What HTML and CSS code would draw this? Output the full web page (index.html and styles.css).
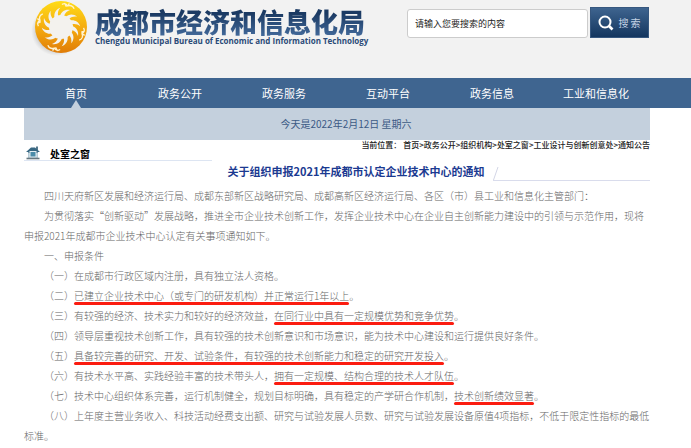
FILE: index.html
```html
<!DOCTYPE html>
<html lang="zh-CN">
<head>
    <meta charset="UTF-8">
    <meta name="viewport" content="width=device-width, initial-scale=1.0">
    <title>成都市经济和信息化局</title>
    <link rel="stylesheet" href="styles.css">
</head>
<body>

<header class="header">
    <div class="wrap header-inner">
        <div class="logo">
            <svg class="emblem" viewBox="0 0 56 56" aria-hidden="true">
                <defs>
                    <linearGradient id="gold" x1="0" y1="0" x2="0" y2="1">
                        <stop offset="0" stop-color="#ffdc18"/>
                        <stop offset="0.5" stop-color="#f5ad10"/>
                        <stop offset="1" stop-color="#e07c08"/>
                    </linearGradient>
                    <radialGradient id="shade">
                        <stop offset="0.6" stop-color="#777" stop-opacity="0.7"/>
                        <stop offset="1" stop-color="#aaa" stop-opacity="0"/>
                    </radialGradient>
                    <path id="ray" d="M27 17 C28 13 32 10 37 11 C34 12 32 14 31 17 Z"/>
                    <path id="bird" d="M23 6 q3 -3 6 0 q4 -3 7 1 M29 6 l1 -3 M25 4 l3 3"/>
                </defs>
                <ellipse cx="26" cy="31" rx="26" ry="25" fill="url(#shade)"/>
                <circle cx="30" cy="27" r="26" fill="url(#gold)"/>
                <g transform="translate(2 -1)">
                    <circle cx="28" cy="28" r="12" fill="#f3f2ee"/>
                    <g fill="#f3f2ee">
                        <use href="#ray"/>
                        <use href="#ray" transform="rotate(30 28 28)"/>
                        <use href="#ray" transform="rotate(60 28 28)"/>
                        <use href="#ray" transform="rotate(90 28 28)"/>
                        <use href="#ray" transform="rotate(120 28 28)"/>
                        <use href="#ray" transform="rotate(150 28 28)"/>
                        <use href="#ray" transform="rotate(180 28 28)"/>
                        <use href="#ray" transform="rotate(210 28 28)"/>
                        <use href="#ray" transform="rotate(240 28 28)"/>
                        <use href="#ray" transform="rotate(270 28 28)"/>
                        <use href="#ray" transform="rotate(300 28 28)"/>
                        <use href="#ray" transform="rotate(330 28 28)"/>
                    </g>
                    <g fill="none" stroke="#fff3cf" stroke-width="1.3">
                        <use href="#bird" transform="rotate(15 28 28)"/>
                        <use href="#bird" transform="rotate(105 28 28)"/>
                        <use href="#bird" transform="rotate(195 28 28)"/>
                        <use href="#bird" transform="rotate(285 28 28)"/>
                    </g>
                </g>
            </svg>
            <div class="logo-text">
                <div class="logo-cn">成都市经济和信息化局</div>
                <div class="logo-en">Chengdu Municipal Bureau of Economic and Information Technology</div>
            </div>
        </div>
        <form class="search">
            <input class="search-input" type="text" placeholder="请输入您要搜索的内容" aria-label="请输入您要搜索的内容">
            <button class="search-btn" type="button">
                <svg width="16" height="16" viewBox="0 0 16 16" fill="none" stroke="#fff" aria-hidden="true">
                    <circle cx="7" cy="7" r="5.5" stroke-width="2"/>
                    <path d="M11 11 L14.5 14.5" stroke-width="2.6"/>
                </svg>
                <span>搜 索</span>
            </button>
        </form>
    </div>
</header>

<nav class="nav">
    <div class="wrap nav-inner">
        <a class="nav-item active" href="#">首页</a>
        <a class="nav-item" href="#">政务公开</a>
        <a class="nav-item" href="#">政务服务</a>
        <a class="nav-item" href="#">互动平台</a>
        <a class="nav-item" href="#">政务信息</a>
        <a class="nav-item" href="#">工业和信息化</a>
    </div>
</nav>

<main class="wrap">
    <div class="date-bar">今天是2022年2月12日 星期六</div>

    <div class="section-head">
        <div class="section-name">
            <svg width="16" height="14" viewBox="0 0 16 14" aria-hidden="true">
                <rect x="3" y="5" width="10" height="7" fill="#b5cbd6"/>
                <path d="M11 0.5 h2 v4 h-2 z" fill="#55788c"/>
                <path d="M1 6 L6 1.5 H10 L15 6 H12.5 V7 H3.5 V6 Z" fill="#376782"/>
                <rect x="5" y="5.5" width="6" height="5.5" fill="#4a8ba8" stroke="#e2edf1"/>
                <path d="M1.5 12.5 H14.5" stroke="#66777f" stroke-width="1.6"/>
            </svg>
            <h2>处室之窗</h2>
        </div>
        <div class="crumbs">当前位置： <a href="#">首页</a>&gt;<a href="#">政务公开</a>&gt;<a href="#">组织机构</a>&gt;<a href="#">处室之窗</a>&gt;<a href="#">工业设计与创新创意处</a>&gt;<a href="#">通知公告</a></div>
    </div>

    <div class="title-row">
        <h1>关于组织申报2021年成都市认定企业技术中心的通知</h1>
        <div class="title-line">
            <svg width="6" height="14" viewBox="0 0 6 14" aria-hidden="true">
                <path d="M0.5 14 L5 1" stroke="#d3d6e6" fill="none"/>
            </svg>
        </div>
    </div>

    <article class="article">
        <p>四川天府新区发展和经济运行局、成都东部新区战略研究局、成都高新区经济运行局、各区（市）县工业和信息化主管部门：</p>
        <p>为贯彻落实“创新驱动”发展战略，推进全市企业技术创新工作，发挥企业技术中心在企业自主创新能力建设中的引领与示范作用，现将申报2021年成都市企业技术中心认定有关事项通知如下。</p>
        <p>一、申报条件</p>
        <p>（一）在成都市行政区域内注册，具有独立法人资格。</p>
        <p>（二）<span class="mark">已建立企业技术中心（或专门的研发机构）并正常运行1年以上</span>。</p>
        <p>（三）有较强的经济、技术实力和较好的经济效益，<span class="mark">在同行业中具有一定规模优势和竞争优势</span>。</p>
        <p>（四）领导层重视技术创新工作，具有较强的技术创新意识和市场意识，能为技术中心建设和运行提供良好条件。</p>
        <p>（五）<span class="mark">具备较完善的研究、开发、试验条件，有较强的技术创新能力和稳定的研究开发投入</span>。</p>
        <p>（六）有技术水平高、实践经验丰富的技术带头人，<span class="mark">拥有一定规模、结构合理的技术人才队伍</span>。</p>
        <p>（七）技术中心组织体系完善，运行机制健全，规划目标明确，具有稳定的产学研合作机制，<span class="mark">技术创新绩效显著</span>。</p>
        <p>（八）上年度主营业务收入、科技活动经费支出额、研究与试验发展人员数、研究与试验发展设备原值4项指标，不低于限定性指标的最低标准。</p>
    </article>
</main>

</body>
</html>
```

FILE: styles.css
```css
* {
    box-sizing: border-box;
}
body {
    margin: 0;
    background: #fff;
    font-family: "Noto Sans CJK SC", sans-serif;
    text-spacing-trim: space-all;
}
a {
    color: inherit;
    text-decoration: none;
}
h1, h2, p {
    margin: 0;
}
.wrap {
    margin: 0 41px 0 24px;
}

/* header */
.header {
    height: 78px;
    background: #f2f2f2;
}
.header-inner {
    display: flex;
    justify-content: space-between;
    align-items: flex-start;
}
.logo {
    display: flex;
    padding-left: 7px;
}
.emblem {
    width: 56px;
    height: 56px;
}
.logo-text {
    padding: 8px 0 0 8px;
    white-space: nowrap;
}
.logo-cn {
    font-size: 27px;
    font-weight: 900;
    line-height: 28px;
    color: transparent;
    background: linear-gradient(#1b3a63 20%, #42699a);
    -webkit-background-clip: text;
    background-clip: text;
}
.logo-en {
    font-family: "Open Sans", sans-serif;
    font-size: 8px;
    font-weight: 700;
    line-height: 10px;
    color: #2b4b78;
}
.search {
    display: flex;
    align-items: flex-end;
    gap: 2px;
    padding: 7px 1px 0 0;
}
.search-input {
    width: 181px;
    height: 29px;
    padding: 0 7px;
    border: 1px solid #ccc;
    border-radius: 3px;
    background: #fff;
    font-family: inherit;
    font-size: 9px;
}
.search-input::placeholder {
    color: #222;
}
.search-btn {
    display: flex;
    align-items: center;
    justify-content: center;
    gap: 4px;
    width: 59px;
    height: 31px;
    padding: 0;
    border: 1px solid #36577f;
    background: linear-gradient(#3e648f, #14365f);
    color: #c3d2e4;
    font-family: inherit;
    font-size: 10px;
}

/* nav */
.nav {
    background: #3f6590;
}
.nav-inner {
    display: flex;
    padding-right: 2px;
}
.nav-item {
    position: relative;
    flex: 1;
    color: #fff;
    font-size: 11px;
    line-height: 30px;
    text-align: center;
}
.nav-item.active::after {
    content: "";
    position: absolute;
    left: 50%;
    bottom: 0;
    margin-left: -5px;
    border: 5px solid transparent;
    border-top: 0;
    border-bottom: 8px solid #c4d0dd;
}

.date-bar {
    padding-left: 18px;
    background: #c4d0dd;
    color: #3c5a85;
    font-size: 10px;
    line-height: 32px;
    text-align: center;
}

/* section heading */
.section-head {
    display: flex;
    justify-content: space-between;
    align-items: flex-start;
}
.section-name {
    display: flex;
    align-items: flex-end;
    gap: 9px;
    width: 188px;
    height: 21px;
    padding-left: 1px;
    border-bottom: 1px solid #dde5f2;
}
.section-name h2 {
    font-size: 10px;
    line-height: 13px;
    color: #000;
}
.crumbs {
    color: #222;
    font-size: 8px;
    font-weight: 500;
    line-height: 10px;
    white-space: nowrap;
}
.title-row {
    display: grid;
    grid-template-columns: 1fr auto 1fr;
    align-items: end;
    padding-bottom: 5px;
}
.title-row h1 {
    grid-column: 2;
    margin-left: 38px;
    color: #1b3a91;
    font-size: 11px;
    line-height: 20px;
}
.title-line {
    height: 15px;
    margin-left: 9px;
    border-bottom: 1px solid #d9dcec;
    line-height: 0;
}

/* article */
.article {
    color: #666;
    font-size: 10px;
    font-weight: 300;
    line-height: 20px;
}
.article p {
    text-indent: 2em;
}
.mark {
    position: relative;
}
.mark::after {
    content: "";
    position: absolute;
    left: 0;
    right: 0;
    bottom: -2px;
    height: 3px;
    border-radius: 2px;
    background: #fb1c10;
}
```
